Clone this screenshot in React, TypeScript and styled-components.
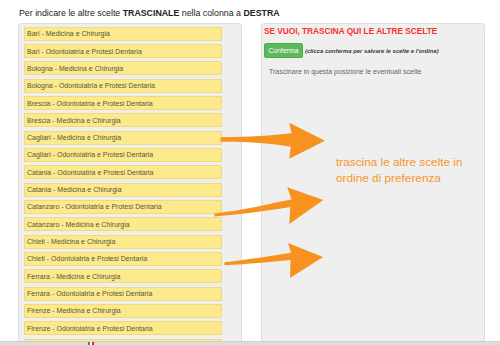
import styled, { createGlobalStyle } from 'styled-components';

const GlobalStyle = createGlobalStyle`
  html, body {
    margin: 0;
    padding: 0;
    background: #fff;
    font-family: "Liberation Sans", Arial, sans-serif;
  }
  * {
    box-sizing: border-box;
  }
`;

const choices = [
  'Bari - Medicina e Chirurgia',
  'Bari - Odontoiatria e Protesi Dentaria',
  'Bologna - Medicina e Chirurgia',
  'Bologna - Odontoiatria e Protesi Dentaria',
  'Brescia - Odontoiatria e Protesi Dentaria',
  'Brescia - Medicina e Chirurgia',
  'Cagliari - Medicina e Chirurgia',
  'Cagliari - Odontoiatria e Protesi Dentaria',
  'Catania - Odontoiatria e Protesi Dentaria',
  'Catania - Medicina e Chirurgia',
  'Catanzaro - Odontoiatria e Protesi Dentaria',
  'Catanzaro - Medicina e Chirurgia',
  'Chieti - Medicina e Chirurgia',
  'Chieti - Odontoiatria e Protesi Dentaria',
  'Ferrara - Medicina e Chirurgia',
  'Ferrara - Odontoiatria e Protesi Dentaria',
  'Firenze - Medicina e Chirurgia',
  'Firenze - Odontoiatria e Protesi Dentaria',
  'Foggia - Medicina e Chirurgia',
];

export default function App() {
  return (
    <>
      <GlobalStyle />
      <Page>
        <Title>
          Per indicare le altre scelte <b>TRASCINALE</b> nella colonna a <b>DESTRA</b>
        </Title>
        <Columns>
          <Panel>
            <ChoiceList>
              {choices.map((c) => (
                <Choice key={c}>{c}</Choice>
              ))}
            </ChoiceList>
          </Panel>
          <Panel>
            <DropHeader>SE VUOI, TRASCINA QUI LE ALTRE SCELTE</DropHeader>
            <ActionRow>
              <ConfirmBtn>Conferma</ConfirmBtn>
              <Note>(clicca conferma per salvare le scelte e l'ordine)</Note>
            </ActionRow>
            <Hint>Trascinare in questa posizione le eventuali scelte</Hint>
            <Callout>
              trascina le altre scelte in
              <br />
              ordine di preferenza
            </Callout>
          </Panel>
        </Columns>
        <StatusBar>
          <Flag />
        </StatusBar>
        <Arrows viewBox="0 0 500 345" width="500" height="345">
          <path
            fill="#f7921e"
            d="M220.5 137.3 C250 137 272 135.5 291.5 133.3 L289.3 122.7 L325 140.7 L289.3 158.7 L290.7 146.7 C270 143 248 141.5 220.5 141.7 Z"
          />
          <path
            fill="#f7921e"
            d="M214.5 213.5 C245 210 268 204 291.5 199.5 L287.3 187.3 L323.3 200 L289.3 224 L290.3 207 C266 211 244 214 214.5 216.5 Z"
          />
          <path
            fill="#f7921e"
            d="M224.5 262.3 C250 259.5 270 256 291 252.8 L288 243 L323 257 L290 278 L290.5 260 C268 262 250 264 224.5 265.3 Z"
          />
        </Arrows>
      </Page>
    </>
  );
}

const Page = styled.div`
  position: relative;
  width: 500px;
  height: 345px;
  overflow: hidden;
  display: flex;
  flex-direction: column;
`;

const Title = styled.div`
  padding: 6px 0 0 19px;
  margin-bottom: 3px;
  height: 20px;
  line-height: 14px;
  font-size: 8.8px;
  color: #222;
  white-space: nowrap;
  b {
    font-weight: bold;
  }
`;

const Columns = styled.div`
  flex: 1;
  min-height: 0;
  display: flex;
  gap: 19px;
  padding-left: 18px;
`;

const Panel = styled.div`
  width: 224px;
  height: 100%;
  overflow: hidden;
  background: #efefef;
  border: 1px solid #dcdcdc;
  border-bottom: none;
  border-radius: 4px 4px 0 0;
  padding: 2px 2px 0;
`;

const ChoiceList = styled.div`
  display: flex;
  flex-direction: column;
  gap: 3.33px;
  padding: 0.7px 0 0 3px;
`;

const Choice = styled.div`
  width: 198px;
  height: 14px;
  flex-shrink: 0;
  display: flex;
  align-items: center;
  padding-left: 2px;
  background: #fbe98b;
  border: 1px solid #f0da7a;
  font-size: 7px;
  color: #5a5540;
  white-space: nowrap;
`;

const DropHeader = styled.div`
  font-size: 8.25px;
  line-height: 12px;
  font-weight: bold;
  color: #f9302c;
  white-space: nowrap;
`;

const ActionRow = styled.div`
  display: flex;
  align-items: center;
  gap: 2px;
  margin-top: 5px;
`;

const ConfirmBtn = styled.button`
  width: 39px;
  height: 15px;
  padding: 0;
  border: 1px solid #4cae4c;
  border-radius: 2px;
  background: #5cb85c;
  color: #fff;
  font-family: "Liberation Sans", Arial, sans-serif;
  font-size: 6.8px;
`;

const Note = styled.span`
  font-size: 5.9px;
  font-style: italic;
  font-weight: bold;
  color: #3a3a3a;
  white-space: nowrap;
`;

const Hint = styled.div`
  margin: 8.7px 0 0 5px;
  font-size: 7px;
  line-height: 10px;
  color: #666;
  white-space: nowrap;
`;

const Callout = styled.div`
  margin: 77px 0 0 72px;
  font-size: 11.8px;
  line-height: 16px;
  color: #f7952c;
  white-space: nowrap;
`;

const StatusBar = styled.div`
  height: 4px;
  flex-shrink: 0;
  background: #dcdcdc;
  border-top: 1px solid #cfcfcf;
  padding-left: 88px;
`;

const Flag = styled.span`
  display: block;
  width: 6px;
  height: 3px;
  background: linear-gradient(90deg, #2f9e44 33%, #fff 33% 66%, #e03131 66%);
`;

const Arrows = styled.svg`
  position: absolute;
  left: 0;
  top: 0;
  pointer-events: none;
`;
